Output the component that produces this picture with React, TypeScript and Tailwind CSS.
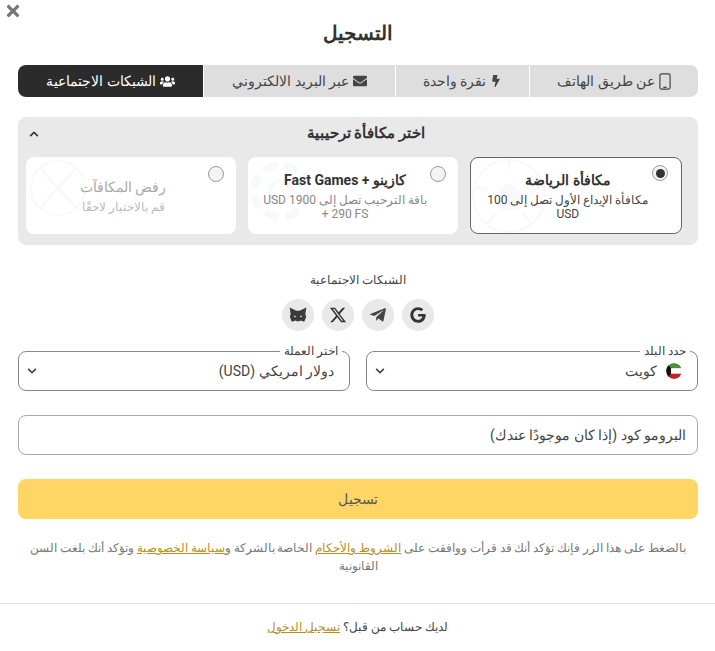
import { FaBolt, FaChevronDown, FaChevronUp, FaEnvelope, FaGoogle, FaTelegramPlane, FaTimes, FaUsers } from 'react-icons/fa';
import { FaXTwitter } from 'react-icons/fa6';

const PhoneIcon = () => (
  <svg viewBox="0 0 14 20" className="h-[17px] w-[12px]" fill="none" stroke="currentColor" strokeWidth="1.4">
    <rect x="1" y="1" width="12" height="18" rx="1.8" />
    <path d="M5 17h4" />
  </svg>
);

const tabs = [
  { label: 'عن طريق الهاتف', icon: <PhoneIcon />, width: 'w-[168px]' },
  { label: 'نقرة واحدة', icon: <FaBolt size={12} />, width: 'w-[133px]' },
  { label: 'عبر البريد الالكتروني', icon: <FaEnvelope size={14} />, width: 'w-[191px]' },
];

const BallMark = () => (
  <svg viewBox="0 0 80 80" className="absolute -left-[2px] top-0 h-[80px] w-[80px] text-[#f8f9fa]" fill="none" stroke="currentColor" strokeWidth="2">
    <circle cx="40" cy="38" r="36" />
    <path d="M40 26l13 10-5 15H32l-5-15z" fill="currentColor" />
    <path d="M40 2v10M6 28l12 5M74 28l-12 5M18 66l8-10M62 66l-8-10" strokeWidth="3" />
  </svg>
);

const ChipMark = () => (
  <svg viewBox="0 0 80 80" className="absolute left-0 top-0 h-[80px] w-[80px] text-[#f8f9fa]" fill="none" stroke="currentColor" strokeWidth="8">
    <circle cx="32" cy="34" r="26" strokeDasharray="14 7" />
    <circle cx="32" cy="34" r="10" strokeWidth="5" />
  </svg>
);

const CrossMark = () => (
  <svg viewBox="0 0 60 60" className="absolute left-[2px] top-[1px] h-[60px] w-[60px] text-[#f9f9f9]" fill="none" stroke="currentColor" strokeWidth="2">
    <circle cx="30" cy="30" r="27" />
    <path d="M12 10l36 40M48 10L12 50" strokeWidth="3" />
  </svg>
);

const bonusCards = [
  { title: 'مكافأة الرياضة', text: 'مكافأة الإيداع الأول تصل إلى 100 USD', selected: true, muted: false, mark: <BallMark /> },
  { title: 'كازينو + Fast Games', text: 'باقة الترحيب تصل إلى 1900 USD + 290 FS', selected: false, muted: false, mark: <ChipMark /> },
  { title: 'رفض المكافآت', text: 'قم بالاختيار لاحقًا', selected: false, muted: true, mark: <CrossMark /> },
];

interface BonusCardProps {
  title: string;
  text: string;
  selected: boolean;
  muted: boolean;
  mark: React.ReactNode;
}

function BonusCard({ title, text, selected, muted, mark }: BonusCardProps) {
  return (
    <div className={`relative flex h-[77px] flex-1 flex-col items-center justify-center overflow-hidden rounded-lg bg-white pl-3 pr-7 text-center ${selected ? 'border border-[#666]' : ''}`}>
      {mark}
      <span className={`absolute flex h-4 w-4 items-center justify-center rounded-full border border-[#999] bg-[#f4f4f4] ${selected ? 'right-[13px] top-[7px]' : 'right-[12px] top-[9px]'}`}>
        {selected && <span className="h-[9px] w-[9px] rounded-full bg-[#333]" />}
      </span>
      <div className={`relative mb-1 text-[14px] leading-[18px] ${muted ? 'text-[#aaa]' : 'font-bold text-[#333]'}`}>{title}</div>
      <div className={`relative text-[12px] leading-[14px] ${muted ? 'text-[#bbb]' : selected ? 'text-[#444]' : 'text-[#888]'}`}>{text}</div>
    </div>
  );
}

function SelectField({ label, value, flag }: { label: string; value: string; flag?: boolean }) {
  return (
    <div className="relative flex h-10 flex-1 items-center rounded-lg border border-[#888] bg-white pl-[8px] pr-[15px]">
      <span className="absolute -top-[7px] right-[7px] bg-white px-1 text-[12px] leading-[12px] text-[#444]">{label}</span>
      {flag && (
        <svg viewBox="0 0 16 16" className="ml-[9px] h-4 w-4 rounded-full">
          <clipPath id="kw"><circle cx="8" cy="8" r="8" /></clipPath>
          <g clipPath="url(#kw)">
            <rect width="16" height="5.4" fill="#4d8f3a" />
            <rect y="5.4" width="16" height="5.3" fill="#fff" />
            <rect y="10.7" width="16" height="5.3" fill="#c8202f" />
            <path d="M16 0v16l-5-5V5z" fill="#111" transform="matrix(-1 0 0 1 16 0)" />
          </g>
        </svg>
      )}
      <span className="flex-1 text-[14px] text-[#444]">{value}</span>
      <FaChevronDown size={10} className="text-[#444]" />
    </div>
  );
}

export default function App() {
  return (
    <div dir="rtl" className="relative h-[651px] w-[715px] overflow-hidden bg-white font-['Roboto','Noto_Sans',sans-serif] text-[#333]">
      <button className="absolute left-[4px] top-[2px] text-[#777]">
        <FaTimes size={18} />
      </button>

      <div className="pl-[18px] pr-[17px]">
        <h1 className="pt-[20px] text-center text-[20px] font-semibold leading-[26px] text-[#333]">التسجيل</h1>

        <div className="mt-[19px] flex h-8 gap-px overflow-hidden rounded-lg text-[14px] text-[#444]">
          {tabs.map(tab => (
            <div key={tab.label} className={`flex items-center justify-center gap-1 bg-[#dedede] ${tab.width}`}>
              {tab.icon}
              <span>{tab.label}</span>
            </div>
          ))}
          <div className="flex flex-1 items-center justify-center gap-1 bg-[#2b2b2b] font-medium text-white">
            <FaUsers size={15} />
            <span>الشبكات الاجتماعية</span>
          </div>
        </div>

        <section className="mt-5 h-[128px] rounded-lg bg-[#e9e9e9] px-2">
          <div className="relative flex h-[40px] items-center justify-center pb-2 pl-4 text-[15px] font-bold text-[#333]">
            اختر مكافأة ترحيبية
            <FaChevronUp size={10} className="absolute left-[3px] top-[12px]" />
          </div>
          <div className="flex gap-[11.5px] pr-2">
            {bonusCards.map(card => (
              <BonusCard key={card.title} {...card} />
            ))}
          </div>
        </section>

        <p className="mt-[27px] text-center text-[11.5px] leading-4 text-[#444]">الشبكات الاجتماعية</p>
        <div className="mt-[11px] flex justify-center gap-2">
          <span className="flex h-8 w-8 items-center justify-center rounded-full bg-[#e9e9e9] text-[#333]">
            <FaGoogle size={16} />
          </span>
          <span className="flex h-8 w-8 items-center justify-center rounded-full bg-[#e9e9e9] text-[#444]">
            <FaTelegramPlane size={18} />
          </span>
          <span className="flex h-8 w-8 items-center justify-center rounded-full bg-[#e9e9e9] text-[#333]">
            <FaXTwitter size={18} />
          </span>
          <span className="flex h-8 w-8 items-center justify-center rounded-full bg-[#e9e9e9]">
            <svg viewBox="0 0 24 24" className="h-[20px] w-[20px]" fill="#3a3a3a">
              <path d="M2 3l8 4h4l8-4-1.2 8 1 3-2.3 6-4.5-1.5-1.5 1h-3l-1.500-1L4.500 20 2.200 14l1-3z" />
              <path d="M7 12.500l3 1-2 1.500zM17 12.500l-3 1 2 1.500z" fill="#e9e9e9" />
            </svg>
          </span>
        </div>

        <div className="mt-5 flex gap-4">
          <SelectField label="حدد البلد" value="كويت" flag />
          <SelectField label="اختر العملة" value="دولار امريكي (USD)" />
        </div>

        <div className="mt-6 flex h-10 items-center rounded-lg border border-[#aaa] bg-white px-[11px] text-[14px] text-[#444]">
          البرومو كود (إذا كان موجودًا عندك)
        </div>

        <button className="mt-6 block h-10 w-full rounded-lg bg-[#ffd666] text-[14px] text-[#555]">تسجيل</button>

        <p className="mt-[20px] px-[8px] text-center text-[11.5px] leading-[18px] text-[#777]">
          بالضغط على هذا الزر فإنك تؤكد أنك قد قرأت ووافقت على <a className="text-[#b8901f] underline">الشروط والأحكام</a> الخاصة بالشركة و<a className="text-[#b8901f] underline">سياسة الخصوصية</a> وتؤكد أنك بلغت السن القانونية
        </p>
      </div>

      <div className="mt-[28px] border-t border-[#e4e4e4] pt-[14px] text-center text-[11.5px] leading-[18px] text-[#444]">
        لديك حساب من قبل؟ <a className="text-[#b8901f] underline">تسجيل الدخول</a>
      </div>
    </div>
  );
}
